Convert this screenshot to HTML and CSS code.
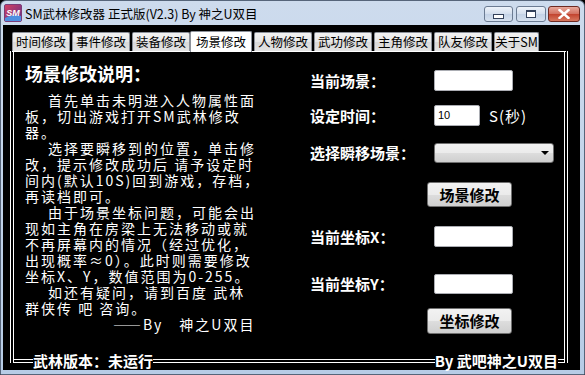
FILE: index.html
```html
<!DOCTYPE html>
<html lang="zh-CN">
<head>
  <meta charset="UTF-8">
  <meta name="viewport" content="width=device-width, initial-scale=1.0">
  <title>SM武林修改器 正式版(V2.3) By 神之U双目</title>
  <link rel="stylesheet" href="styles.css">
</head>
<body>

  <div class="window">
    <div class="titlebar">
      <svg class="app-icon" width="18" height="18" viewBox="0 0 18 18">
        <defs>
          <linearGradient id="iconBg" x1="0" y1="0" x2="1" y2="1">
            <stop offset="0" stop-color="#d8405e"/>
            <stop offset="1" stop-color="#5b2f8e"/>
          </linearGradient>
        </defs>
        <rect x="0.5" y="0.5" width="17" height="17" rx="1.5" fill="url(#iconBg)" stroke="#7a3c78"/>
        <path d="M1 14 Q9 9 17 12 L17 17 L1 17 Z" fill="#4f8fe0"/>
        <text x="9" y="12" text-anchor="middle" font-family="Liberation Sans, sans-serif" font-size="9" font-weight="bold" font-style="italic" fill="#fff">SM</text>
      </svg>
      <span class="title-text">SM武林修改器 正式版(V2.3) By 神之U双目</span>
      <div class="caption-buttons">
        <div class="cap-btn cap-min"><span class="glyph-min"></span></div>
        <div class="cap-btn cap-max"><span class="glyph-max"></span></div>
        <div class="cap-btn cap-close">
          <svg width="12" height="10" viewBox="0 0 12 10">
            <path d="M1.5 1 L10.5 9 M10.5 1 L1.5 9" stroke="#fff" stroke-width="2.4" stroke-linecap="square"/>
          </svg>
        </div>
      </div>
    </div>

    <div class="client">
      <div class="tabs">
        <div class="tab">时间修改</div>
        <div class="tab">事件修改</div>
        <div class="tab">装备修改</div>
        <div class="tab active">场景修改</div>
        <div class="tab">人物修改</div>
        <div class="tab">武功修改</div>
        <div class="tab">主角修改</div>
        <div class="tab">队友修改</div>
        <div class="tab tab-about">关于SM</div>
      </div>

      <div class="panel">
        <div class="panel-body">
          <div class="notes">
            <h2 class="notes-title">场景修改说明：</h2>
            <div class="notes-text">
              <p class="para">首先单击未明进入人物属性面<br>板，切出游戏打开SM武林修改<br>器。</p>
              <p class="para">选择要瞬移到的位置，单击修<br>改，提示修改成功后 请予设定时<br>间内(默认10S)回到游戏，存档，<br>再读档即可。</p>
              <p class="para">由于场景坐标问题，可能会出<br>现如主角在房梁上无法移动或就<br>不再屏幕内的情况（经过优化，<br>出现概率≈0）。此时则需要修改<br>坐标X、Y，数值范围为0-255。</p>
              <p class="para">如还有疑问，请到百度 武林<br>群侠传 吧 咨询。</p>
              <p class="signature">——By<span class="sig-name">神之U双目</span></p>
            </div>
          </div>

          <div class="form">
            <div class="row row-scene">
              <span class="label">当前场景：</span>
              <div class="field"></div>
            </div>
            <div class="row row-time">
              <span class="label">设定时间：</span>
              <div class="field field-short">10</div>
              <span class="unit">S(秒)</span>
            </div>
            <div class="row row-select">
              <span class="label">选择瞬移场景：</span>
              <div class="combo"><span class="combo-arrow"></span></div>
            </div>
            <div class="btn btn-scene">场景修改</div>
            <div class="row row-x">
              <span class="label">当前坐标X：</span>
              <div class="field"></div>
            </div>
            <div class="row row-y">
              <span class="label">当前坐标Y：</span>
              <div class="field field-y"></div>
            </div>
            <div class="btn btn-coord">坐标修改</div>
          </div>
        </div>

        <div class="status">
          <span class="line line-start"></span>
          <span class="status-text">武林版本：未运行</span>
          <span class="line line-fill"></span>
          <span class="status-text">By 武吧神之U双目</span>
          <span class="line line-end"></span>
        </div>
      </div>
    </div>
  </div>

</body>
</html>
```

FILE: styles.css
```css
body {
  margin: 0;
  padding: 0;
  font-family: "Noto Sans CJK SC", sans-serif;
  background-color: #000;
}

.window {
  width: 585px;
  height: 375px;
  box-sizing: border-box;
  display: flex;
  flex-direction: column;
  background: linear-gradient(#cddbed, #b7cce6);
  border: 1px solid #56657a;
  border-radius: 6px 6px 0 0;
}

/* title bar */
.titlebar {
  height: 24px;
  display: flex;
  align-items: center;
  padding: 0 4px 0 3px;
}

.app-icon {
  margin-right: 3px;
}

.title-text {
  font-size: 12.5px;
  color: #000;
  flex: 1;
  white-space: nowrap;
}

.caption-buttons {
  display: flex;
  align-self: flex-start;
  margin-top: 5px;
}

.cap-btn {
  height: 16px;
  box-sizing: border-box;
  border: 1px solid #6b7b92;
  border-radius: 3px;
  display: flex;
  align-items: center;
  justify-content: center;
  background: linear-gradient(#eef3fa, #d3deed 50%, #c3d2e6 51%, #d6e1ef);
}

.cap-min {
  width: 29px;
  margin-right: 3px;
}

.cap-max {
  width: 30px;
  margin-right: 2px;
}

.cap-close {
  width: 32px;
  border-color: #6e2a22;
  background: linear-gradient(#e9a99c, #d2705f 50%, #c2432e 51%, #d7785f);
}

.glyph-min {
  width: 9px;
  height: 3px;
  margin-top: 5px;
  background: #fff;
  border: 1px solid #33415a;
}

.glyph-max {
  width: 8px;
  height: 5px;
  background: #fff;
  border: 1px solid #33415a;
  border-top-width: 2px;
}

/* client area */
.client {
  flex: 1;
  margin: 0 4px 4px 2px;
  background-color: #000;
  padding: 7px 12px 7px 7px;
  display: flex;
  flex-direction: column;
}

.tabs {
  display: flex;
  align-items: flex-end;
  gap: 2px;
  height: 20px;
  padding-left: 2px;
  position: relative;
  z-index: 1;
  margin-bottom: -1px;
}

.tab {
  width: 58px;
  height: 19px;
  box-sizing: border-box;
  border: 1px solid #8d929b;
  border-bottom: none;
  border-radius: 2px 2px 0 0;
  background: linear-gradient(#f3f3f3, #e6e6e6 50%, #d9d9d9 51%, #e3e3e3);
  font-size: 12.5px;
  line-height: 18px;
  text-align: center;
  color: #000;
  margin-bottom: 1px;
}

.tab.active {
  width: 62px;
  height: 21px;
  margin-left: -2px;
  margin-bottom: 0;
  background: #fff;
  line-height: 20px;
}

.tab.tab-about {
  width: 45px;
}

/* tab page */
.panel {
  flex: 1;
  display: flex;
  flex-direction: column;
  border-top: 1px solid #fff;
  border-left: 4px double #fff;
  border-right: 4px double #fff;
}

.panel-body {
  flex: 1;
  display: grid;
  grid-template-columns: 285px 1fr;
  padding: 11px 0 0 11px;
}

.notes-title {
  margin: 0;
  font-size: 18px;
  font-weight: bold;
  line-height: 20px;
  color: #fff;
  white-space: nowrap;
}

.notes-text {
  margin-top: 9px;
  font-size: 14px;
  line-height: 16px;
  letter-spacing: 2px;
  color: #fff;
  white-space: nowrap;
}

.para {
  margin: 0;
  text-indent: 23px;
}

.signature {
  margin: 0;
  padding-left: 88px;
}

.sig-name {
  margin-left: 16px;
}

/* form column */
.form {
  display: flex;
  flex-direction: column;
  align-items: flex-start;
  padding-top: 7px;
}

.row {
  display: flex;
  align-items: center;
}

.label {
  width: 124px;
  font-size: 15px;
  font-weight: bold;
  color: #fff;
  white-space: nowrap;
}

.field {
  width: 79px;
  height: 21px;
  box-sizing: border-box;
  background: #fff;
  border: 1px solid #abadb3;
  border-radius: 2px;
}

.field-short {
  width: 46px;
  font-family: "Liberation Sans", sans-serif;
  font-size: 11px;
  line-height: 19px;
  padding-left: 3px;
  color: #000;
}

.field-y {
  height: 20px;
}

.unit {
  margin-left: 9px;
  font-size: 15px;
  letter-spacing: 1px;
  color: #fff;
}

.row-time {
  margin-top: 14px;
}

.row-select {
  margin-top: 16px;
}

.combo {
  width: 120px;
  height: 20px;
  box-sizing: border-box;
  border: 1px solid #707070;
  border-radius: 3px;
  background: linear-gradient(#f2f2f2, #ebebeb 50%, #dddddd 51%, #cfcfcf);
  display: flex;
  align-items: center;
  justify-content: flex-end;
  padding-right: 4px;
}

.combo-arrow {
  width: 0;
  height: 0;
  border-left: 4px solid transparent;
  border-right: 4px solid transparent;
  border-top: 4px solid #000;
}

.btn {
  width: 85px;
  height: 25px;
  box-sizing: border-box;
  margin-left: 117px;
  border: 1px solid #707070;
  border-radius: 3px;
  background: linear-gradient(#f2f2f2, #ebebeb 50%, #dddddd 51%, #cfcfcf);
  font-size: 15px;
  font-weight: bold;
  line-height: 23px;
  text-align: center;
  color: #000;
}

.btn-scene {
  margin-top: 19px;
}

.row-x {
  margin-top: 19px;
}

.row-y {
  margin-top: 26px;
}

.btn-coord {
  margin-top: 14px;
  height: 26px;
  line-height: 24px;
}

/* bottom status line */
.status {
  display: flex;
  align-items: flex-end;
  height: 4px;
}

.line {
  height: 4px;
  box-sizing: border-box;
  border-bottom: 4px double #fff;
}

.line-start {
  width: 19px;
}

.line-fill {
  flex: 1;
}

.line-end {
  width: 6px;
}

.status-text {
  font-size: 15px;
  font-weight: bold;
  line-height: 16px;
  color: #fff;
  background: #000;
  margin-bottom: -6px;
  white-space: nowrap;
}
```
